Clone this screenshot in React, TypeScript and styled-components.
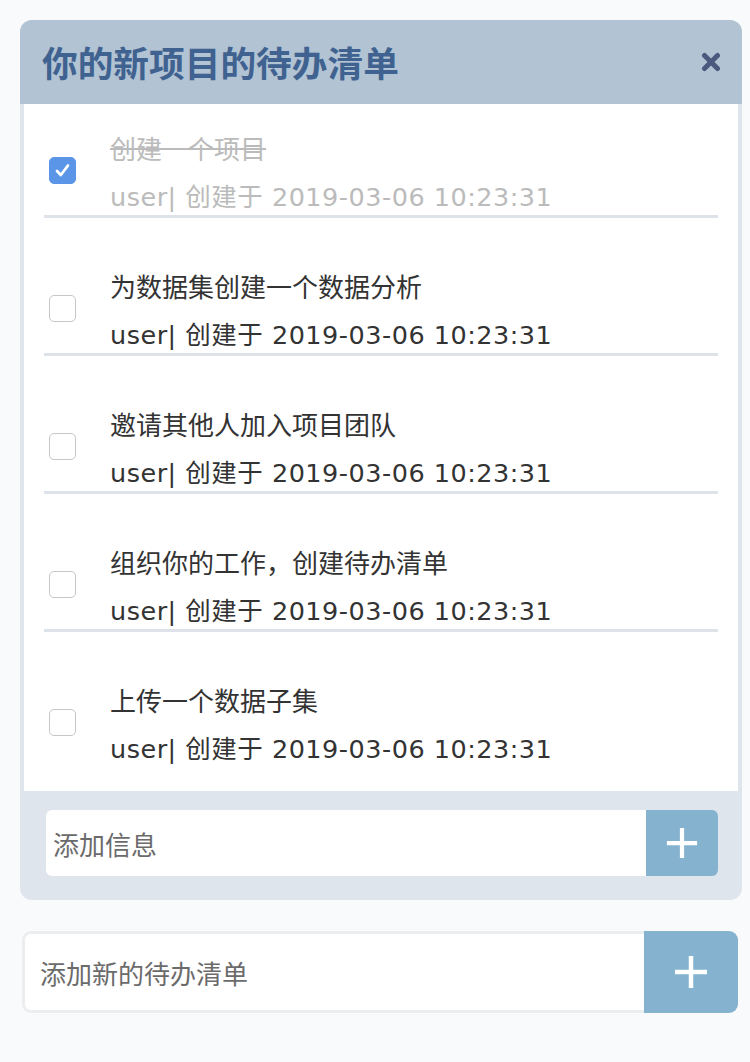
import React from "react";
import styled, { createGlobalStyle } from "styled-components";

const GlobalStyle = createGlobalStyle`
  html, body {
    margin: 0;
    padding: 0;
    background: #f9fafc;
    font-family: "Noto Sans CJK SC", "Noto Sans", sans-serif;
  }
  * { box-sizing: border-box; }
`;

const Page = styled.div`
  width: 750px;
  min-height: 1062px;
  padding: 20px 0 0 0;
  background: #f9fafc;
`;

const Card = styled.section`
  margin: 0 8px 0 20px;
  background: #dee5ed;
  border-radius: 12px;
  overflow: hidden;
`;

const Header = styled.header`
  height: 84px;
  background: #b2c3d3;
  display: flex;
  align-items: center;
  justify-content: space-between;
  padding: 0 21px 0 22px;
`;

const Title = styled.h1`
  margin: 0;
  font-size: 35.7px;
  line-height: 40px;
  font-weight: 700;
  color: #3f6290;
`;

const CloseButton = styled.button`
  border: 0;
  background: none;
  padding: 0;
  width: 20px;
  height: 20px;
  display: flex;
  cursor: pointer;
`;

const List = styled.ul`
  list-style: none;
  margin: 0 4px;
  padding: 0 20px 24px;
  background: #ffffff;
`;

const Item = styled.li<{ $last?: boolean }>`
  display: flex;
  align-items: flex-start;
  padding: 28px 0 2px;
  margin-bottom: ${(p) => (p.$last ? "0" : "24px")};
  border-bottom: ${(p) => (p.$last ? "0" : "3px solid #dde3e8")};
`;

const Check = styled.span<{ $checked?: boolean }>`
  flex: none;
  width: 27px;
  height: 27px;
  margin: 25px 0 0 5px;
  border-radius: 5px;
  border: 1px solid ${(p) => (p.$checked ? "#5b95e8" : "#c6c6c6")};
  background: ${(p) => (p.$checked ? "#5b95e8" : "#ffffff")};
  display: flex;
  align-items: center;
  justify-content: center;
`;

const Texts = styled.div<{ $done?: boolean }>`
  margin-left: 34px;
  display: flex;
  flex-direction: column;
  gap: 17px;
  color: ${(p) => (p.$done ? "#bbbbbb" : "#333333")};
`;

const ItemTitle = styled.div<{ $done?: boolean }>`
  font-size: 26px;
  line-height: 32px;
  text-decoration: ${(p) => (p.$done ? "line-through" : "none")};
`;

const Meta = styled.div`
  font-family: "DejaVu Sans", "Noto Sans CJK SC", sans-serif;
  font-size: 25.5px;
  line-height: 32px;
  letter-spacing: 0.5px;
`;

const Footer = styled.div`
  padding: 19px 24px 24px 26px;
`;

const InputRow = styled.div<{ $big?: boolean }>`
  display: flex;
  height: ${(p) => (p.$big ? "82px" : "66px")};
`;

const TextInput = styled.input<{ $big?: boolean }>`
  flex: 1;
  min-width: 0;
  height: 100%;
  border: ${(p) => (p.$big ? "3px solid #ebedf0" : "0")};
  border-right: 0;
  border-radius: ${(p) => (p.$big ? "9px 0 0 9px" : "6px 0 0 6px")};
  background: #ffffff;
  padding: 0 0 0 ${(p) => (p.$big ? "15px" : "7px")};
  font-family: "Noto Sans CJK SC", "Noto Sans", sans-serif;
  font-size: 26px;
  color: #333;
  outline: none;
  &::placeholder {
    color: #6b6b6b;
  }
`;

const AddButton = styled.button<{ $big?: boolean }>`
  flex: none;
  width: ${(p) => (p.$big ? "94px" : "72px")};
  height: 100%;
  border: 0;
  border-radius: ${(p) => (p.$big ? "0 9px 9px 0" : "0 6px 6px 0")};
  background: #84b2cf;
  display: flex;
  align-items: center;
  justify-content: center;
  cursor: pointer;
  padding: 0;
`;

const NewList = styled.div`
  margin: 31px 12px 0 22px;
`;

const Plus = ({ size }: { size: number }) => (
  <svg width={size} height={size} viewBox="0 0 36 36">
    <path d="M18 2 V34 M2 18 H34" stroke="#fff" strokeWidth="4.5" fill="none" />
  </svg>
);

const items = [
  { title: "创建一个项目", done: true },
  { title: "为数据集创建一个数据分析", done: false },
  { title: "邀请其他人加入项目团队", done: false },
  { title: "组织你的工作，创建待办清单", done: false },
  { title: "上传一个数据子集", done: false },
];

export default function App() {
  return (
    <>
      <GlobalStyle />
      <Page>
        <Card>
          <Header>
            <Title>你的新项目的待办清单</Title>
            <CloseButton aria-label="close">
              <svg width="20" height="20" viewBox="0 0 20 20">
                <path
                  d="M3.5 3.5 L16.5 16.5 M16.5 3.5 L3.5 16.5"
                  stroke="#4a5a7e"
                  strokeWidth="5"
                  strokeLinecap="round"
                />
              </svg>
            </CloseButton>
          </Header>
          <List>
            {items.map((it, i) => (
              <Item key={i} $last={i === items.length - 1}>
                <Check $checked={it.done}>
                  {it.done && (
                    <svg width="21" height="21" viewBox="0 0 21 21">
                      <path
                        d="M5 11 L8.8 15 L16 5.5"
                        stroke="#fff"
                        strokeWidth="2.8"
                        fill="none"
                        strokeLinecap="round"
                        strokeLinejoin="round"
                      />
                    </svg>
                  )}
                </Check>
                <Texts $done={it.done}>
                  <ItemTitle $done={it.done}>{it.title}</ItemTitle>
                  <Meta>user| 创建于 2019-03-06 10:23:31</Meta>
                </Texts>
              </Item>
            ))}
          </List>
          <Footer>
            <InputRow>
              <TextInput placeholder="添加信息" />
              <AddButton aria-label="add">
                <Plus size={34} />
              </AddButton>
            </InputRow>
          </Footer>
        </Card>
        <NewList>
          <InputRow $big>
            <TextInput $big placeholder="添加新的待办清单" />
            <AddButton $big aria-label="add list">
              <Plus size={36} />
            </AddButton>
          </InputRow>
        </NewList>
      </Page>
    </>
  );
}
